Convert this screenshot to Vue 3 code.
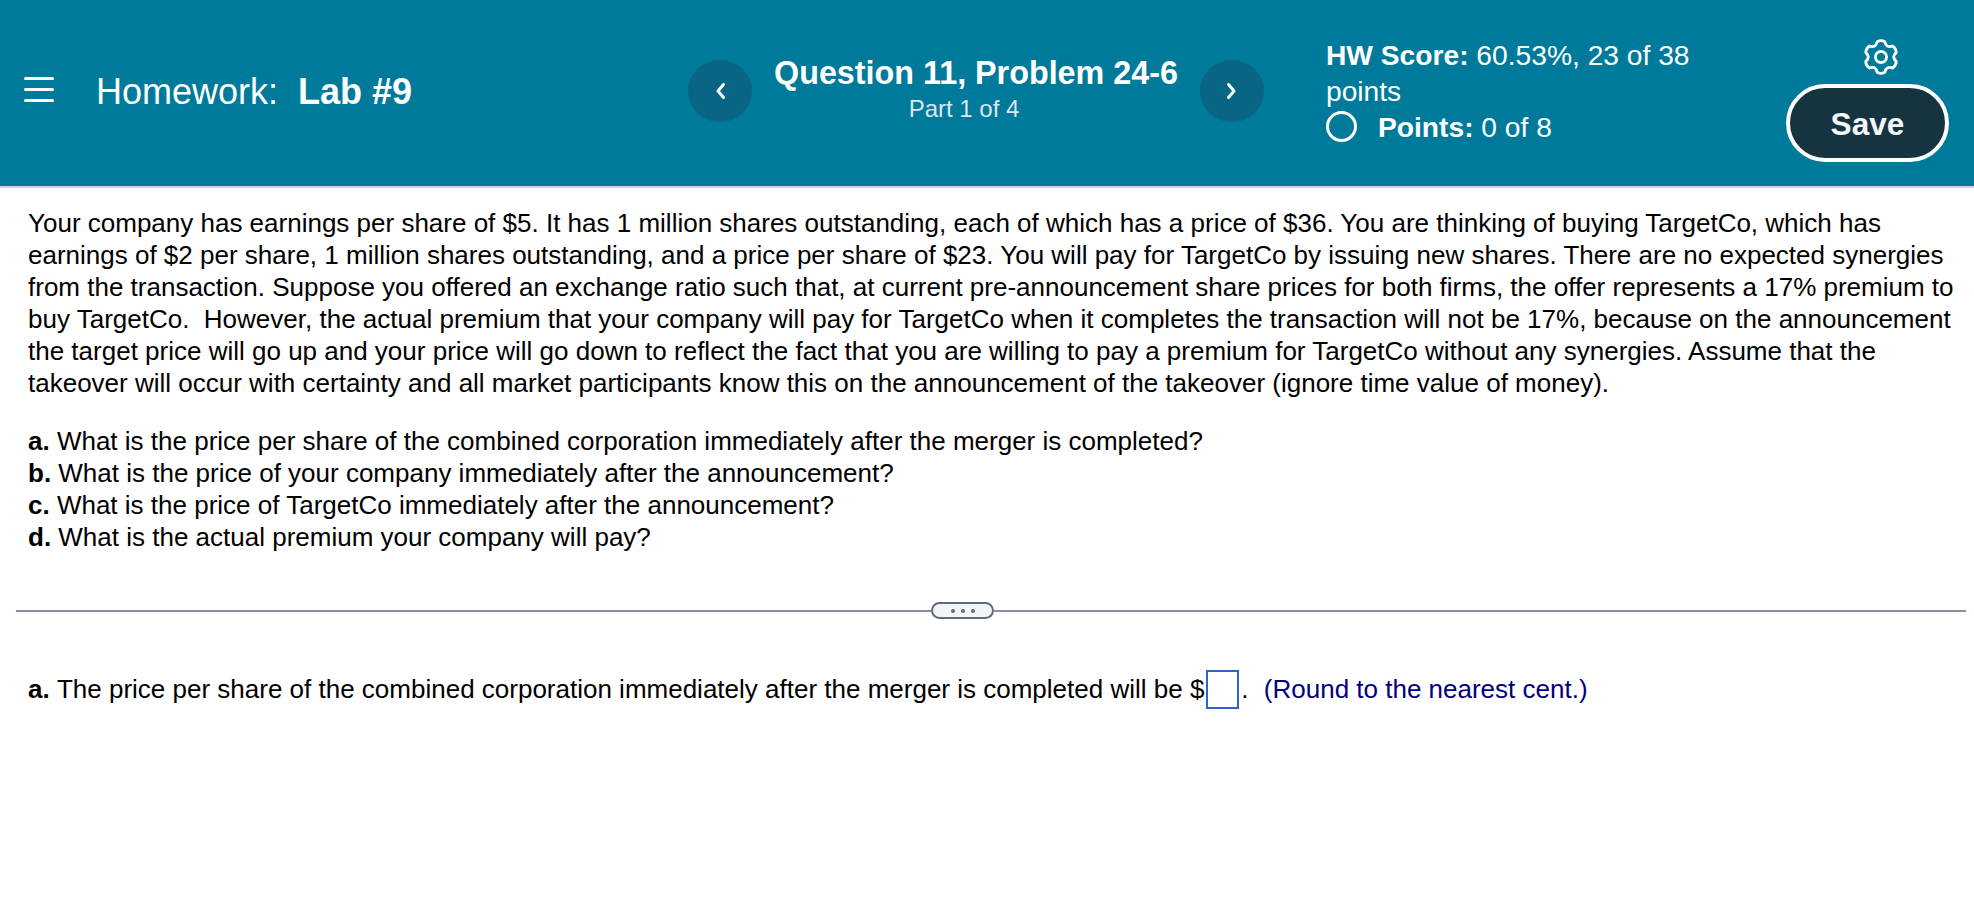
<script setup>
const problemLines = [
  'Your company has earnings per share of $5. It has 1 million shares outstanding, each of which has a price of $36. You are thinking of buying TargetCo, which has',
  'earnings of $2 per share, 1 million shares outstanding, and a price per share of $23. You will pay for TargetCo by issuing new shares. There are no expected synergies',
  'from the transaction. Suppose you offered an exchange ratio such that, at current pre-announcement share prices for both firms, the offer represents a 17% premium to',
  'buy TargetCo.\u00a0 However, the actual premium that your company will pay for TargetCo when it completes the transaction will not be 17%, because on the announcement',
  'the target price will go up and your price will go down to reflect the fact that you are willing to pay a premium for TargetCo without any synergies. Assume that the',
  'takeover will occur with certainty and all market participants know this on the announcement of the takeover (ignore time value of money).',
]

const parts = [
  { label: 'a.', text: 'What is the price per share of the combined corporation immediately after the merger is completed?' },
  { label: 'b.', text: 'What is the price of your company immediately after the announcement?' },
  { label: 'c.', text: 'What is the price of TargetCo immediately after the announcement?' },
  { label: 'd.', text: 'What is the actual premium your company will pay?' },
]

// six rounded teeth, one pointing straight up
const polar = (r, deg) => {
  const a = (deg * Math.PI) / 180
  return `${(12 + r * Math.cos(a)).toFixed(2)} ${(12 + r * Math.sin(a)).toFixed(2)}`
}
const gearPath = (() => {
  let d = ''
  for (let i = 0; i < 6; i++) {
    const a = -90 + i * 60
    d += `${i === 0 ? 'M' : 'L'}${polar(10, a - 14)}Q${polar(11, a)} ${polar(10, a + 14)}`
    d += `Q${polar(6.4, a + 30)} ${polar(10, a + 46)}`
  }
  return d + 'Z'
})()
</script>

<template>
  <div class="page">
    <header class="topbar">
      <button class="menu-btn" aria-label="Menu">
        <span></span><span></span><span></span>
      </button>
      <div class="hw-title">Homework:&nbsp; <b>Lab #9</b></div>

      <button class="nav-btn prev" aria-label="Previous question">
        <svg width="12" height="18" viewBox="0 0 12 18"><path d="M9.500 2.500 4 9l5.500 6.500" fill="none" stroke="#fff" stroke-width="3" stroke-linecap="round" stroke-linejoin="round"/></svg>
      </button>
      <div class="question">
        <div class="q-name">Question 11, Problem 24-6</div>
        <div class="q-part">Part 1 of 4</div>
      </div>
      <button class="nav-btn next" aria-label="Next question">
        <svg width="12" height="18" viewBox="0 0 12 18"><path d="M2.500 2.500 8 9l-5.500 6.500" fill="none" stroke="#fff" stroke-width="3" stroke-linecap="round" stroke-linejoin="round"/></svg>
      </button>

      <div class="score">
        <div><b>HW Score:</b> 60.53%, 23 of 38</div>
        <div>points</div>
        <div class="points-row"><span class="ring"></span><span><b>Points:</b> 0 of 8</span></div>
      </div>

      <div class="actions">
        <svg class="gear" width="38" height="38" viewBox="0 0 24 24" fill="none" stroke="#fff" stroke-width="1.8" stroke-linejoin="round">
          <path :d="gearPath"/>
          <circle cx="12" cy="12" r="3.500"/>
        </svg>
        <button class="save-btn">Save</button>
      </div>
    </header>

    <main class="content">
      <p class="problem">
        <span v-for="line in problemLines" :key="line" class="line">{{ line }}</span>
      </p>
      <p class="parts">
        <span v-for="p in parts" :key="p.label" class="line"><b>{{ p.label }}</b> {{ p.text }}</span>
      </p>

      <div class="divider">
        <span class="rule rule-left"></span>
        <span class="more"><i></i><i></i><i></i></span>
        <span class="rule"></span>
      </div>

      <div class="answer">
        <b>a.</b>&nbsp;The price per share of the combined corporation immediately after the merger is completed will be $<span class="answer-box"></span>.
        <span class="hint">(Round to the nearest cent.)</span>
      </div>
    </main>
  </div>
</template>

<style scoped>
.page {
  width: 1974px;
  height: 918px;
  overflow: hidden;
  background: #fff;
  font-family: "Liberation Sans", Arial, sans-serif;
  color: #000;
}

.topbar {
  height: 186px;
  border-bottom: 2px solid #ccd2e0;
  background: #007a9b;
  color: #fff;
  display: flex;
  align-items: center;
}

button {
  border: 0;
  padding: 0;
  font-family: inherit;
  cursor: pointer;
}

.menu-btn {
  width: 30px;
  margin: 0 0 7px 24px;
  display: flex;
  flex-direction: column;
  gap: 8px;
  background: none;
}

.menu-btn span {
  height: 3px;
  border-radius: 2px;
  background: #fff;
}

.hw-title {
  margin: 0 0 2px 42px;
  width: 592px;
  font-size: 36px;
}

.nav-btn {
  width: 64px;
  height: 62px;
  margin-bottom: 4px;
  flex: none;
  border-radius: 50%;
  background: #096584;
  display: flex;
  align-items: center;
  justify-content: center;
}

.question {
  width: 448px;
  margin-bottom: 8px;
  text-align: center;
}

.q-name {
  font-size: 32.3px;
  font-weight: 700;
  line-height: 36px;
}

.q-part {
  margin-top: 4px;
  padding-right: 24px;
  font-size: 24px;
  line-height: 28px;
  color: #dbe6ef;
}

.score {
  margin: 0 0 5px 62px;
  width: 460px;
  font-size: 28.2px;
  line-height: 36px;
}

.points-row {
  display: flex;
  align-items: center;
  gap: 21px;
}

.ring {
  width: 31px;
  height: 31px;
  box-sizing: border-box;
  border: 3px solid #fff;
  border-radius: 50%;
}

.actions {
  display: flex;
  flex-direction: column;
  align-items: center;
  width: 163px;
  margin-top: 12px;
}

.gear {
  margin: 1px 0 8px 26px;
}

.save-btn {
  width: 163px;
  height: 78px;
  box-sizing: border-box;
  border: 4px solid #fff;
  border-radius: 39px;
  padding-top: 4px;
  background: #163340;
  color: #f4f6fa;
  font-size: 31.6px;
  font-weight: 700;
}

.content {
  padding: 19px 0 0 28px;
  font-size: 26px;
  line-height: 32px;
}

.line {
  display: block;
  white-space: nowrap;
}

.problem {
  margin: 0;
}

.parts {
  margin: 26px 0 0;
}

.divider {
  display: flex;
  align-items: center;
  margin: 49px 8px 0 -12px;
}

.rule {
  flex: 1;
  height: 2px;
  background: #87909f;
}

.rule-left {
  flex: none;
  width: 915px;
}

.more {
  width: 63px;
  height: 17px;
  box-sizing: border-box;
  border: 2px solid #5e6b7d;
  border-radius: 9px;
  background: #f2f4f8;
  display: flex;
  align-items: center;
  justify-content: center;
  gap: 6px;
}

.more i {
  width: 4px;
  height: 4px;
  border-radius: 50%;
  background: #5e6b7d;
}

.answer {
  margin-top: 51px;
  white-space: nowrap;
  line-height: 39px;
}

.answer-box {
  display: inline-block;
  width: 33px;
  height: 39px;
  margin-left: 2px;
  margin-right: 2px;
  box-sizing: border-box;
  border: 2px solid #2f64c6;
  vertical-align: top;
}

.hint {
  margin-left: 8px;
  color: #000080;
}
</style>
